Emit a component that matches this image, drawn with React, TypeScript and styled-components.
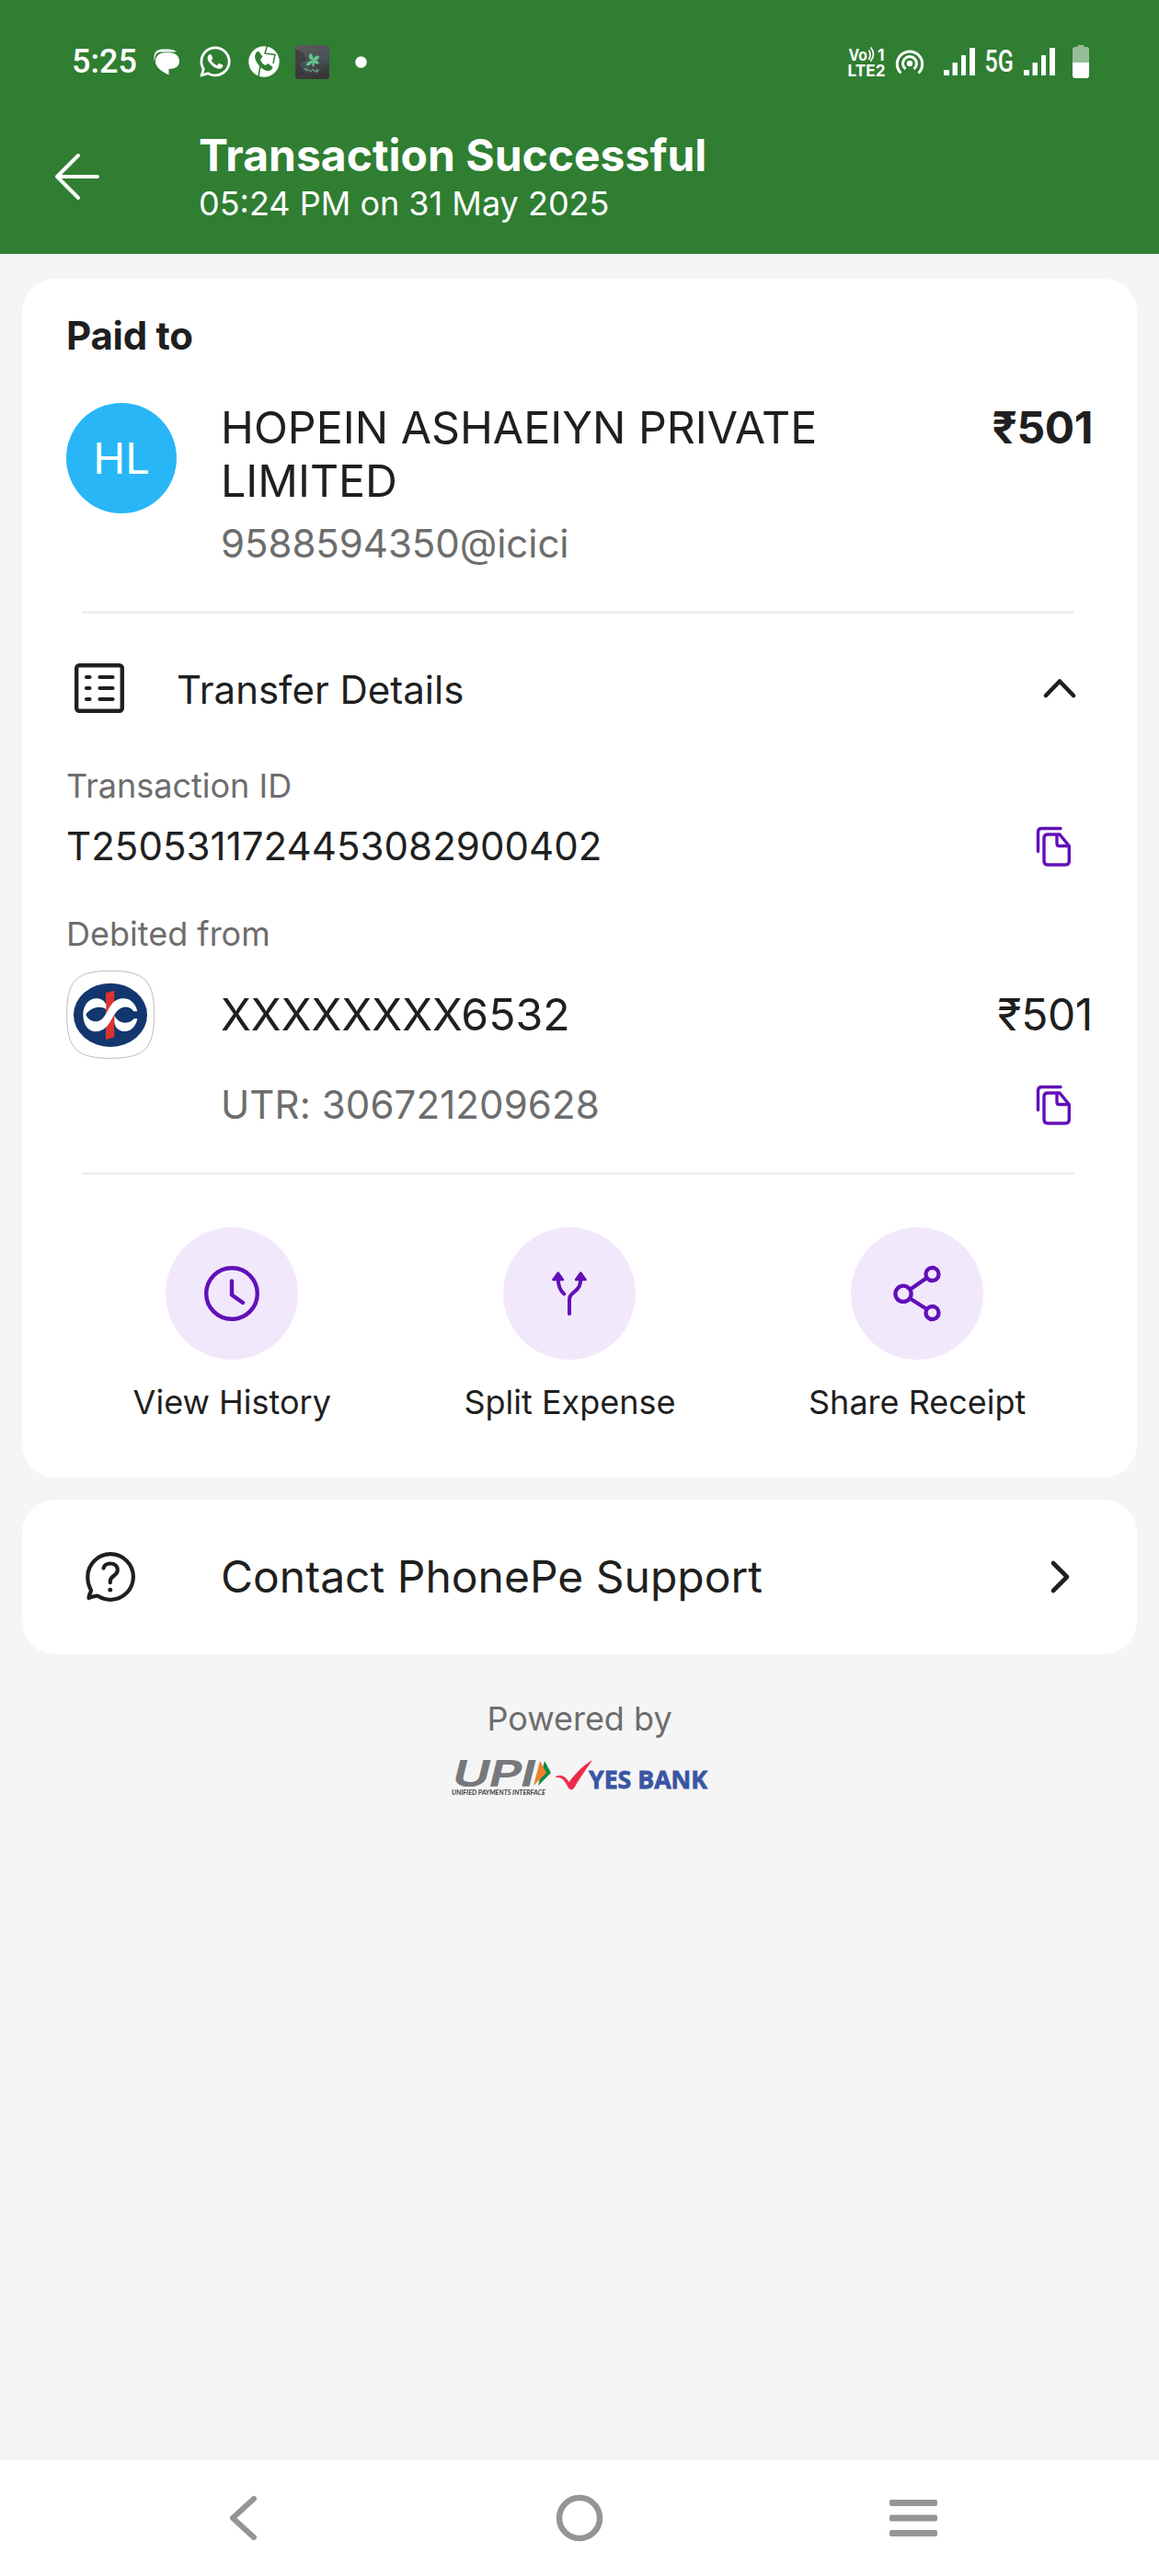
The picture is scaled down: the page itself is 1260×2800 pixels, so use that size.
import React from "react";
import styled, { createGlobalStyle } from "styled-components";
import { FaWhatsapp } from "react-icons/fa";

const ink = "#1f1f1f";
const muted = "#6d6d6d";
const purple = "#6210b8";

const GlobalStyle = createGlobalStyle`
  * { box-sizing: border-box; }
  body {
    margin: 0;
    background: #f5f5f5;
    font-family: Inter, "Liberation Sans", sans-serif;
    color: ${ink};
  }
  svg { display: block; flex: none; overflow: visible; }
`;

const Screen = styled.div`
  width: 1260px;
  height: 2800px;
  display: flex;
  flex-direction: column;
  background: #f5f5f5;
  overflow: hidden;
`;

const Header = styled.header`
  height: 276px;
  background: #2f7e32;
  color: #fff;
  display: flex;
  flex-direction: column;
`;

const StatusBar = styled.div`
  height: 134px;
  padding: 0 76px 0 78px;
  display: flex;
  align-items: center;
  justify-content: space-between;
`;

const StatusGroup = styled.div`
  display: flex;
  align-items: center;
`;

const Clock = styled.span`
  width: 89px;
  font: 500 36px/40px Roboto, sans-serif;
`;

const NetworkLabel = styled.span`
  width: 42px;
  font: 500 33px/40px Roboto, sans-serif;
  display: inline-block;
  transform: scaleX(0.76);
  transform-origin: 2px 50%;
`;

const Gap = styled.span<{ $w: number }>`
  flex: none;
  width: ${(p) => p.$w}px;
`;

const TitleBar = styled.div`
  display: flex;
  align-items: flex-start;
  padding: 9px 0 0 60px;
`;

const BackArrow = styled.svg`
  margin: 22px 108px 0 0;
`;

const TitleBlock = styled.div`
  display: flex;
  flex-direction: column;
`;

interface TextProps {
  $size: number;
  $line: number;
  $weight?: number;
  $color?: string;
  $spacing?: number;
}

const Text = styled.span<TextProps>`
  display: block;
  white-space: nowrap;
  font-size: ${(p) => p.$size}px;
  line-height: ${(p) => p.$line}px;
  font-weight: ${(p) => p.$weight ?? 400};
  color: ${(p) => p.$color ?? "inherit"};
  letter-spacing: ${(p) => p.$spacing ?? 0}px;
`;

const Card = styled.section`
  margin: 0 24px;
  border-radius: 36px;
  background: #fff;
`;

const PaymentCard = styled(Card)`
  margin-top: 27px;
  height: 1303px;
  padding: 32px 48px 0;
  display: flex;
  flex-direction: column;
`;

const PayeeRow = styled.div`
  display: flex;
  align-items: flex-start;
  margin-top: 41px;
  height: 228px;
`;

const Avatar = styled.div`
  width: 120px;
  height: 120px;
  margin: 2px 48px 0 0;
  border-radius: 50%;
  background: #29b6f6;
  color: #fff;
  display: flex;
  align-items: center;
  justify-content: center;
`;

const Payee = styled.div`
  flex: 1;
`;

const Divider = styled.hr<{ $top?: number }>`
  flex: none;
  width: 1079px;
  height: 3px;
  margin: ${(p) => p.$top ?? 0}px 0 0 17px;
  border: 0;
  background: #efefef;
`;

const SectionHeader = styled.div`
  display: flex;
  align-items: center;
  height: 166px;
  padding: 0 18px 4px 9px;
`;

const SectionTitle = styled.div`
  flex: 1;
  padding: 4px 0 0 57px;
`;

const CopyRow = styled.div<{ $indent?: boolean; $height: number }>`
  display: flex;
  align-items: center;
  justify-content: space-between;
  height: ${(p) => p.$height}px;
  padding: 0 24px 0 ${(p) => (p.$indent ? 168 : 0)}px;
`;

const DebitLabel = styled.div`
  padding: 20px 0 10px;
`;

const BankRow = styled.div`
  display: flex;
  align-items: center;
  height: 96px;
`;

const BankName = styled.div`
  flex: 1;
  padding-left: 72px;
`;

const Actions = styled.div`
  display: flex;
  justify-content: center;
  gap: 144.500px;
  margin-top: 57px;
`;

const Action = styled.div`
  display: flex;
  flex-direction: column;
  align-items: center;
  gap: 24px;
`;

const ActionCircle = styled.div`
  width: 144px;
  height: 144px;
  border-radius: 50%;
  background: #f2e8fc;
  display: flex;
  align-items: center;
  justify-content: center;
`;

const SupportCard = styled(Card)`
  margin-top: 24px;
  height: 168px;
  padding: 0 71px 0 69px;
  display: flex;
  align-items: center;
`;

const SupportLabel = styled.div`
  flex: 1;
  padding-left: 93px;
`;

const Footer = styled.footer`
  flex: 1;
  display: flex;
  flex-direction: column;
  align-items: center;
  padding-top: 46px;
`;

const LogoRow = styled.div`
  display: flex;
  align-items: flex-start;
  margin-top: 21px;
  gap: 3px;
`;

const NavBar = styled.nav`
  height: 126px;
  background: #fff;
  display: flex;
  align-items: center;
  justify-content: space-between;
  padding: 0 240px 0 247px;
`;

const Bars = () => (
  <svg width="34" height="30" viewBox="0 0 34 30" fill="#fff">
    <path d="M0 24h6v6h-6zM9.500 16h5.500v14h-5.500zM19 8h5v22h-5zM28 0h6v30h-6z" />
  </svg>
);

const MessageIcon = () => (
  <svg width="29" height="29" viewBox="0 0 29 29">
    <path d="M0.500 14V9C0.500 4 4 .5 9 .5h7c4 0 7 1 9 3H8.500C4 3.500 1.600 6 1.600 10z" fill="#fff" />
    <path d="M2 14C2 8 6.500 4.300 12 4.300h5.500c6 0 10.500 3.500 10.500 9.200S23.500 22 16.500 22v6.500C9 25 2 20 2 14z" fill="#fff" />
  </svg>
);

const CallerIcon = () => (
  <svg width="34" height="34" viewBox="0 0 34 34">
    <circle cx="17" cy="17" r="16.700" fill="#fff" />
    <path
      d="M20.500 0 18 8l11 1.500-2 9.500M11 33l2-11"
      fill="none"
      stroke="#2f7e32"
      strokeWidth="1.500"
    />
    <path
      d="M11 5.500C7 7.500 6 11.500 8.500 16.500c3 6 8 10 12.500 10.500 3 .2 5.500-2 5.500-4l-5-4-3 2c-3-1.500-5-4-5.500-6.500l2.500-3z"
      fill="#2f7e32"
    />
  </svg>
);

const ThumbIcon = () => (
  <svg width="37" height="37" viewBox="0 0 37 37">
    <defs>
      <linearGradient id="thumb" x1="0" y1="0" x2="0.300" y2="1">
        <stop offset="0" stopColor="#5f5858" />
        <stop offset="0.600" stopColor="#465358" />
        <stop offset="1" stopColor="#3a3638" />
      </linearGradient>
    </defs>
    <rect width="37" height="37" rx="3" fill="url(#thumb)" />
    <path d="M0 4 9 9l3 7-7 5 6 10-11 5z" fill="#332c2e" opacity="0.500" />
    <path
      d="M19 17c-5-2-5-6-2-8 2 2 3 4 2 8zm0 0c1-5 4-6 7-5 0 3-2 5-7 5zm0 0c4-1 6 0 7 3-3 1-6 0-7-3zm0 0c-1 4-4 6-7 5 0-3 3-5 7-5zm0 0c2 2 2 4 1 7-2-2-2-4-1-7z"
      fill="#65c98a"
    />
    <path d="M9 27l3-2v3l3-1 2 2 2-3 2 3 3-3-1 4 3-3" stroke="#6fae8b" fill="none" />
  </svg>
);

const VolteIcon = () => (
  <svg width="41" height="34" viewBox="0 0 41 34" fill="#fff">
    <g fontFamily="Inter, sans-serif" fontWeight="700">
      <text x="0.500" y="15.500" fontSize="17.500" textLength="20.500" lengthAdjust="spacingAndGlyphs">Vo</text>
      <text x="32" y="15.500" fontSize="17.500">1</text>
      <text x="-0.500" y="33" fontSize="18" textLength="41" lengthAdjust="spacingAndGlyphs">LTE2</text>
    </g>
    <path d="M22.500 4.500q3 5 0 10.500M24.500 1.500q6 7 0 15" fill="none" stroke="#fff" strokeWidth="1.700" />
  </svg>
);

const HotspotIcon = () => (
  <svg width="32" height="28" viewBox="0 0 32 28" fill="none" stroke="#fff" strokeWidth="3">
    <circle cx="16" cy="16" r="3.200" fill="#fff" stroke="none" />
    <path d="M11.500 22a7.500 7.500 0 1 1 9 0" />
    <path d="M6.500 26.500a13.700 13.700 0 1 1 19 0" />
  </svg>
);

const BatteryIcon = () => (
  <svg width="18" height="36" viewBox="0 0 18 36">
    <path d="M5.500 2V1q0-1 1-1h5q1 0 1 1v1H15q3 0 3 3v15H0V5q0-3 3-3z" fill="#97be98" />
    <path d="M0 19h18v14q0 3-3 3H3q-3 0-3-3z" fill="#fff" />
  </svg>
);

const ListIcon = () => (
  <svg width="54" height="54" viewBox="0 0 54 54" fill="none" stroke={ink}>
    <rect x="2.200" y="2.200" width="49.600" height="49.600" rx="3" strokeWidth="4.400" />
    <path
      d="M13 15h3.500M27.500 15h14M13 27h3.500M27.500 27h14M13 39h3.500M27.500 39h14"
      strokeWidth="4.200"
      strokeLinecap="round"
    />
  </svg>
);

const CopyIcon = () => (
  <svg width="37" height="43" viewBox="0 0 37 43" fill="none" stroke={purple} strokeWidth="3.400">
    <path d="M1.500 26.500V5.500q0-4 4-4H26" strokeLinecap="round" />
    <path
      d="M12 8h13l10.300 12.500V37q0 4-4 4H12q-4 0-4-4V12q0-4 4-4zM22 8.500V18q0 2.500 2.500 2.500H35"
      strokeLinejoin="round"
    />
  </svg>
);

const KotakLogo = () => (
  <svg width="96" height="96" viewBox="6 14 288 288">
    <path
      d="M8 157C8 46 39 15 150 15s143 31 143 142-32 143-143 143S8 268 8 157z"
      fill="#fff"
      stroke="#bcbcbc"
      strokeWidth="3"
    />
    <ellipse cx="150" cy="159" rx="120" ry="104" fill="#14366f" />
    <path d="M135 87 163 79V231L135 239z" fill="#dc3430" />
    <path
      d="M61 158C61 126 80 105 105 105c14 0 25 7 31 19v16c-9-6-21-8-33-5-14 3-27 12-33 23 6 14 18 22 33 22 26 0 35-34 48-52 11-16 27-24 44-23 24 1 38 20 43 42h-12c-8-11-20-15-32-14-22 3-32 27-44 47-13 21-27 33-48 33-24 0-41-23-41-55z"
      fill="#fff"
    />
    <path
      d="M163 161c8 14 19 23 35 23 13 0 23-5 29-13h11c-4 24-20 41-40 41-19 0-33-11-35-31z"
      fill="#fff"
    />
  </svg>
);

const HistoryIcon = () => (
  <svg width="60" height="60" viewBox="0 0 60 60" fill="none" stroke={purple} strokeWidth="4.400">
    <circle cx="30" cy="30" r="27.800" />
    <path d="M30 16.500V31.500l12 8.500" strokeLinecap="round" strokeLinejoin="round" />
  </svg>
);

const SplitIcon = () => (
  <svg width="40" height="48" viewBox="0 0 40 48" fill="none" stroke={purple} strokeWidth="4">
    <path d="M20 46V31c0-4 1.500-5.500 5-8.500 5-4 7.300-7 7.300-15M14.300 24.500C9 20 7.700 15 7.700 7.500" strokeLinecap="round" />
    <path d="M7.700 1.500 13 9H2.400zM32.300 1.500 37.600 9H27z" fill={purple} strokeWidth="2.500" strokeLinejoin="round" />
  </svg>
);

const ShareIcon = () => (
  <svg width="54" height="60" viewBox="0 0 54 60" fill="none" stroke={purple} strokeWidth="4.300">
    <circle cx="12" cy="30.300" r="8.600" />
    <circle cx="43.500" cy="9" r="7" />
    <circle cx="43.500" cy="51" r="7" />
    <path d="M19.500 25.500 37.500 13M19.500 35.500 37.500 47" />
  </svg>
);

const HelpIcon = () => (
  <svg width="54" height="54" viewBox="0 0 54 54" fill="none" stroke={ink} strokeWidth="4.200" strokeLinecap="round" strokeLinejoin="round">
    <path d="M6 41.500C3.500 37 2.300 32.500 2.300 27A24.800 24.800 0 1 1 27 51.800c-5 0-9.500-1.500-13.500-4-2.500-.6-6 .8-10 2.200 0-4 2.500-6 2.500-8.500z" />
    <path d="M19.500 17.500c.8-3.200 3.500-5 7.300-5 4.500 0 8 2.700 8 7.200 0 6-8 6-8 12v1.500" />
    <circle cx="26.800" cy="41.200" r="2.400" fill={ink} stroke="none" />
  </svg>
);

const UpiLogo = () => (
  <svg width="110" height="40" viewBox="0 0 110 40">
    <g transform="translate(3 28) skewX(-14)">
      <text
        x="-3"
        y="0"
        fontFamily="Inter, sans-serif"
        fontWeight="500"
        fontSize="37.500"
        textLength="89"
        lengthAdjust="spacingAndGlyphs"
        fill="#77787b"
        stroke="#77787b"
        strokeWidth="1.300"
      >
        UPI
      </text>
    </g>
    <path d="M102 1 109 14 95 28z" fill="#0e8a45" />
    <path d="M97 1 104 14 90 28z" fill="#f07f2b" />
    <text
      x="1"
      y="38"
      fontFamily="Lato, sans-serif"
      fontStyle="italic"
      fontWeight="700"
      fontSize="8"
      textLength="102"
      lengthAdjust="spacingAndGlyphs"
      fill="#3c3c3c"
    >
      UNIFIED PAYMENTS INTERFACE
    </text>
  </svg>
);

const YesBankLogo = () => (
  <svg width="167" height="36" viewBox="0 0 167 36">
    <path d="M1 18.500c4-2.200 8-1.500 11 1.500 1.500 1.500 2.500 3 3.500 4.500C22 16 30 7 40 1 33 11 26 21 21 30c-1.500 2.500-4.500 2.500-6 0-2-4-4-8.500-8-10.500-2-1-4-1.200-6-1z" fill="#ee2a4a" stroke="#ee2a4a" strokeWidth="0.800" />
    <text
      x="37"
      y="31"
      fontFamily="'Open Sans', sans-serif"
      fontWeight="700"
      fontSize="27"
      textLength="129"
      lengthAdjust="spacingAndGlyphs"
      fill="#3a55a4"
      stroke="#3a55a4"
      strokeWidth="0.800"
    >
      YES BANK
    </text>
  </svg>
);

const actions = [
  { label: "View History", icon: <HistoryIcon /> },
  { label: "Split Expense", icon: <SplitIcon /> },
  { label: "Share Receipt", icon: <ShareIcon /> },
];

export default function App() {
  return (
    <Screen>
      <GlobalStyle />
      <Header>
        <StatusBar>
          <StatusGroup>
            <Clock>5:25</Clock>
            <MessageIcon />
            <Gap $w={19} />
            <FaWhatsapp size={38} />
            <Gap $w={17} />
            <CallerIcon />
            <Gap $w={17} />
            <ThumbIcon />
            <Gap $w={28} />
            <svg width="13" height="13" viewBox="0 0 13 13">
              <circle cx="6.500" cy="6.500" r="6.300" fill="#fff" />
            </svg>
          </StatusGroup>
          <StatusGroup>
            <VolteIcon />
            <Gap $w={10} />
            <HotspotIcon />
            <Gap $w={21} />
            <Bars />
            <Gap $w={10} />
            <NetworkLabel>5G</NetworkLabel>
            <Gap $w={1} />
            <Bars />
            <Gap $w={19} />
            <BatteryIcon />
          </StatusGroup>
        </StatusBar>
        <TitleBar>
          <BackArrow width="48" height="54" viewBox="0 0 48 54" fill="none" stroke="#fff" strokeWidth="4" strokeLinecap="round" strokeLinejoin="round">
            <path d="M25 4 2 27l23 23M2 27h44" />
          </BackArrow>
          <TitleBlock>
            <Text $size={48} $line={52} $weight={700}>Transaction Successful</Text>
            <Text $size={36} $line={52}>05:24 PM on 31 May 2025</Text>
          </TitleBlock>
        </TitleBar>
      </Header>

      <PaymentCard>
        <Text $size={42} $line={60} $weight={700} $spacing={-0.25}>Paid to</Text>
        <PayeeRow>
          <Avatar>
            <Text $size={47} $line={48}>HL</Text>
          </Avatar>
          <Payee>
            <Text $size={48.3} $line={58}>
              HOPEIN ASHAEIYN PRIVATE
              <br />
              LIMITED
            </Text>
            <Text $size={42} $line={78} $color={muted} $spacing={-0.05}>9588594350@icici</Text>
          </Payee>
          <Text $size={48} $line={58} $weight={700} $spacing={-0.4}>₹501</Text>
        </PayeeRow>
        <Divider />
        <SectionHeader>
          <ListIcon />
          <SectionTitle>
            <Text $size={42} $line={60}>Transfer Details</Text>
          </SectionTitle>
          <svg width="36" height="24" viewBox="0 0 36 24" fill="none" stroke={ink} strokeWidth="4.600" strokeLinecap="round" strokeLinejoin="round">
            <path d="M3 20 18 4.500 33 20" />
          </svg>
        </SectionHeader>
        <Text $size={36} $line={42} $color={muted}>Transaction ID</Text>
        <CopyRow $height={90}>
          <Text $size={42} $line={60} $spacing={0.05}>T2505311724453082900402</Text>
          <CopyIcon />
        </CopyRow>
        <DebitLabel>
          <Text $size={36} $line={60} $color={muted}>Debited from</Text>
        </DebitLabel>
        <BankRow>
          <KotakLogo />
          <BankName>
            <Text $size={48.2} $line={60}>XXXXXXXX6532</Text>
          </BankName>
          <Text $size={48} $line={60} $spacing={-0.4}>₹501</Text>
        </BankRow>
        <CopyRow $height={100} $indent>
          <Text $size={42} $line={60} $color={muted} $spacing={0.1}>UTR: 306721209628</Text>
          <CopyIcon />
        </CopyRow>
        <Divider $top={23} />
        <Actions>
          {actions.map((a) => (
            <Action key={a.label}>
              <ActionCircle>{a.icon}</ActionCircle>
              <Text $size={36} $line={44}>{a.label}</Text>
            </Action>
          ))}
        </Actions>
      </PaymentCard>

      <SupportCard>
        <HelpIcon />
        <SupportLabel>
          <Text $size={48} $line={60}>Contact PhonePe Support</Text>
        </SupportLabel>
        <svg width="24" height="38" viewBox="0 0 24 38" fill="none" stroke={ink} strokeWidth="4.600" strokeLinecap="round" strokeLinejoin="round">
          <path d="M4 4 19 19 4 34" />
        </svg>
      </SupportCard>

      <Footer>
        <Text $size={36} $line={48} $color={muted}>Powered by</Text>
        <LogoRow>
          <UpiLogo />
          <YesBankLogo />
        </LogoRow>
      </Footer>

      <NavBar>
        <svg width="47" height="52" viewBox="0 0 47 52" fill="none" stroke="#959595" strokeWidth="6" strokeLinecap="round" strokeLinejoin="round">
          <path d="M29 5 6 26l23 21" />
        </svg>
        <svg width="52" height="52" viewBox="0 0 52 52" fill="none" stroke="#959595" strokeWidth="6.500">
          <circle cx="26" cy="26" r="22" />
        </svg>
        <svg width="54" height="42" viewBox="0 0 54 42" fill="#959595">
          <rect x="1" y="1" width="52" height="7" rx="2" />
          <rect x="1" y="17.500" width="52" height="7" rx="2" />
          <rect x="1" y="34" width="52" height="7" rx="2" />
        </svg>
      </NavBar>
    </Screen>
  );
}
